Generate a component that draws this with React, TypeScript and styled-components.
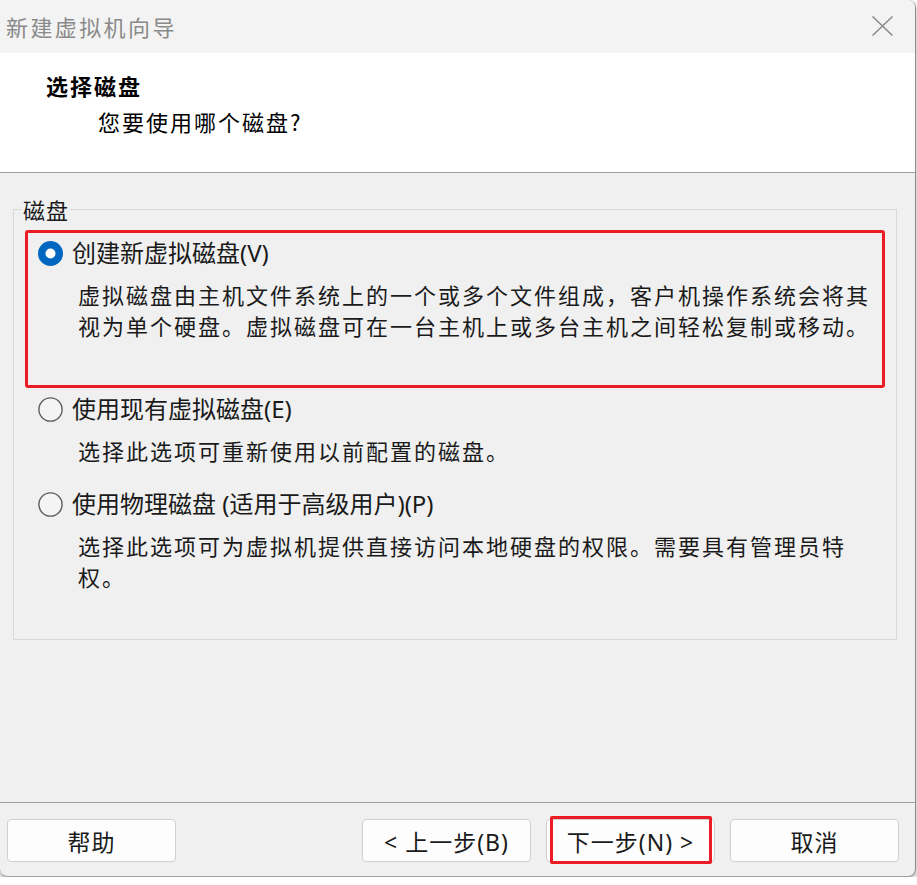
import React from "react";
import styled, { createGlobalStyle } from "styled-components";

const Global = createGlobalStyle`
  html, body { margin: 0; padding: 0; background: #ffffff; }
  body {
    font-family: "Noto Sans CJK SC", "Noto Sans", sans-serif;
    color: #1a1a1a;
  }
`;

const Window = styled.div`
  width: 916px;
  height: 877px;
  box-sizing: border-box;
  display: flex;
  flex-direction: column;
  background: #f0f0f0;
  border-right: 1px solid #8c8c8c;
  border-bottom: 1px solid #a0a0a0;
  border-radius: 0 8px 8px 8px;
  box-shadow: 0 4px 8px rgba(0, 0, 0, 0.35);
  overflow: hidden;
`;

const TitleBar = styled.div`
  height: 53px;
  flex: none;
  display: flex;
  align-items: center;
  justify-content: space-between;
  padding: 0 22px 0 6px;
  background: #f3f3f3;
`;

const TitleText = styled.div`
  font-size: 22px;
  letter-spacing: 2.4px;
  line-height: 30px;
  color: #8a8a8a;
  margin-top: -2px;
`;

const CloseButton = styled.div`
  width: 21px;
  height: 20px;
  display: flex;
  margin-top: -1px;
`;

const Header = styled.div`
  height: 120px;
  flex: none;
  box-sizing: border-box;
  background: #ffffff;
  border-bottom: 1px solid #a0a0a0;
  padding: 17px 0 0 46px;
`;

const Heading = styled.div`
  font-size: 22px;
  letter-spacing: 2px;
  font-weight: 700;
  line-height: 30px;
  color: #000;
`;

const SubHeading = styled.div`
  font-size: 22px;
  letter-spacing: 2px;
  line-height: 30px;
  color: #000;
  margin: 6px 0 0 52px;
`;

const Body = styled.div`
  flex: 1;
  padding: 25px 18px 0 13px;
`;

const Group = styled.fieldset`
  margin: 0;
  padding: 0;
  height: 442px;
  box-sizing: border-box;
  border: 1px solid #d9d9d9;
  min-width: 0;
`;

const GroupLegend = styled.legend`
  font-size: 22px;
  letter-spacing: 1px;
  line-height: 22px;
  margin-left: 8px;
  padding: 0 1px;
  color: #1a1a1a;
`;

const Highlight = styled.div`
  margin: 10px 11px 0 11px;
  height: 158px;
  box-sizing: border-box;
  border: 3px solid #ec1c24;
  border-radius: 3px;
  padding: 4px 0 0 10px;
`;

const Options = styled.div`
  padding-left: 24px;
`;

const Option = styled.div<{ $gap?: number }>`
  margin-top: ${(p) => p.$gap ?? 0}px;
`;

const OptionRow = styled.div`
  display: flex;
  align-items: center;
  height: 32px;
  gap: 9px;
`;

const OptionLabel = styled.span`
  font-family: "Noto Sans", "Noto Sans CJK SC", sans-serif;
  font-size: 24px;
  line-height: 32px;
  color: #1a1a1a;
`;

const Description = styled.div`
  margin: 10px 0 0 40px;
  font-size: 22px;
  letter-spacing: 2px;
  line-height: 31px;
  color: #1a1a1a;
  white-space: nowrap;
`;

const Footer = styled.div`
  height: 74px;
  flex: none;
  box-sizing: border-box;
  border-top: 1px solid #a0a0a0;
  display: flex;
  align-items: flex-start;
  gap: 15px;
  padding: 16px 16px 0 7px;
`;

const Button = styled.div<{ $push?: boolean }>`
  position: relative;
  width: 169px;
  height: 43px;
  box-sizing: border-box;
  display: flex;
  align-items: center;
  justify-content: center;
  background: #fdfdfd;
  border: 1px solid #d0d0d0;
  border-radius: 4px;
  font-family: "Noto Sans", "Noto Sans CJK SC", sans-serif;
  font-size: 23px;
  letter-spacing: 1px;
  color: #1a1a1a;
  margin-right: ${(p) => (p.$push ? "auto" : "0")};
`;

const Annotation = styled.div`
  position: absolute;
  top: -4px;
  bottom: -3px;
  left: 3px;
  right: 2px;
  border: 3px solid #ec1c24;
  border-radius: 2px;
  pointer-events: none;
`;

function Radio({ checked }: { checked?: boolean }) {
  return (
    <svg width="25" height="25" viewBox="0 0 25 25" style={{ flex: "none" }}>
      {checked ? (
        <>
          <circle cx="12.5" cy="12.5" r="12.5" fill="#0067c0" />
          <circle cx="12.5" cy="12.5" r="5" fill="#ffffff" />
        </>
      ) : (
        <circle cx="12.5" cy="12.5" r="11.6" fill="#f4f4f4" stroke="#5e5e5e" strokeWidth="1.4" />
      )}
    </svg>
  );
}

export default function App() {
  return (
    <>
      <Global />
      <Window>
        <TitleBar>
          <TitleText>新建虚拟机向导</TitleText>
          <CloseButton>
            <svg width="21" height="20" viewBox="0 0 21 20">
              <path d="M0.5 0.5 L20.5 19.5 M20.5 0.5 L0.5 19.5" stroke="#8a8a8a" strokeWidth="1.5" fill="none" />
            </svg>
          </CloseButton>
        </TitleBar>
        <Header>
          <Heading>选择磁盘</Heading>
          <SubHeading>您要使用哪个磁盘?</SubHeading>
        </Header>
        <Body>
          <Group>
            <GroupLegend>磁盘</GroupLegend>
            <Highlight>
              <OptionRow>
                <Radio checked />
                <OptionLabel>创建新虚拟磁盘(V)</OptionLabel>
              </OptionRow>
              <Description>
                虚拟磁盘由主机文件系统上的一个或多个文件组成，客户机操作系统会将其
                <br />
                视为单个硬盘。虚拟磁盘可在一台主机上或多台主机之间轻松复制或移动。
              </Description>
            </Highlight>
            <Options>
              <Option $gap={5}>
                <OptionRow>
                  <Radio />
                  <OptionLabel>使用现有虚拟磁盘(E)</OptionLabel>
                </OptionRow>
                <Description>选择此选项可重新使用以前配置的磁盘。</Description>
              </Option>
              <Option $gap={22}>
                <OptionRow>
                  <Radio />
                  <OptionLabel>使用物理磁盘 (适用于高级用户)(P)</OptionLabel>
                </OptionRow>
                <Description>
                  选择此选项可为虚拟机提供直接访问本地硬盘的权限。需要具有管理员特
                  <br />
                  权。
                </Description>
              </Option>
            </Options>
          </Group>
        </Body>
        <Footer>
          <Button $push>帮助</Button>
          <Button>&lt; 上一步(B)</Button>
          <Button>
            下一步(N) &gt;
            <Annotation />
          </Button>
          <Button>取消</Button>
        </Footer>
      </Window>
    </>
  );
}
